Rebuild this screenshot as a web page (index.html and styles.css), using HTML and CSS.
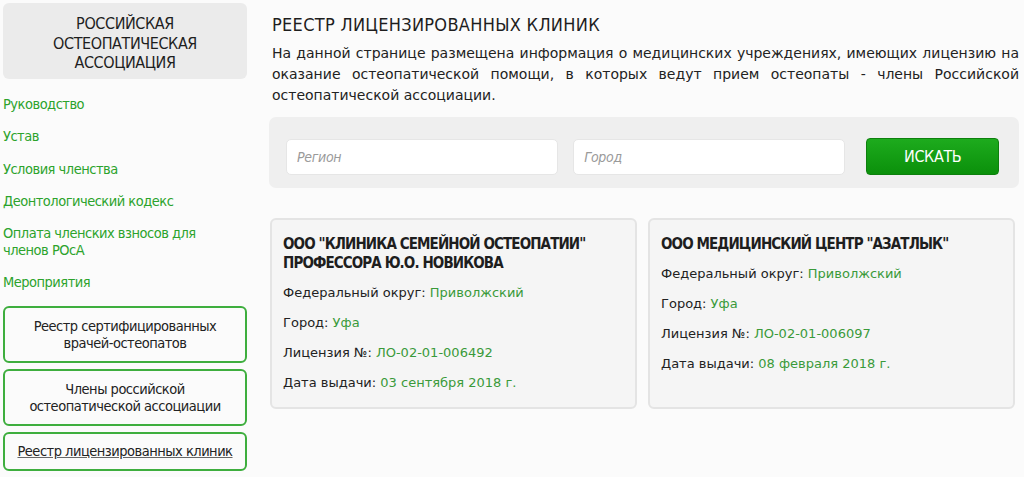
FILE: index.html
```html
<!DOCTYPE html>
<html lang="ru">
<head>
    <meta charset="UTF-8">
    <meta name="viewport" content="width=device-width, initial-scale=1.0">
    <title>Реестр лицензированных клиник</title>
    <link rel="stylesheet" href="styles.css">
</head>
<body>
    <div class="page">
        <aside class="sidebar">
            <div class="logo-box">Российская остеопатическая ассоциация</div>
            <nav class="side-menu">
                <a href="#">Руководство</a>
                <a href="#">Устав</a>
                <a href="#">Условия членства</a>
                <a href="#">Деонтологический кодекс</a>
                <a href="#">Оплата членских взносов для членов РОсА</a>
                <a href="#">Мероприятия</a>
            </nav>
            <div class="side-buttons">
                <a class="side-btn" href="#">Реестр сертифицированных<br>врачей-остеопатов</a>
                <a class="side-btn" href="#">Члены российской<br>остеопатической ассоциации</a>
                <a class="side-btn active" href="#">Реестр лицензированных клиник</a>
            </div>
        </aside>

        <main class="content">
            <h1 class="page-title">Реестр лицензированных клиник</h1>
            <p class="intro">На данной странице размещена информация о медицинских учреждениях, имеющих лицензию на оказание остеопатической помощи, в которых ведут прием остеопаты - члены Российской остеопатической ассоциации.</p>

            <form class="search-panel" onsubmit="return false">
                <input type="text" class="search-input" placeholder="Регион">
                <input type="text" class="search-input" placeholder="Город">
                <button type="submit" class="search-btn">Искать</button>
            </form>

            <div class="clinics">
                <div class="clinic-card">
                    <h3 class="clinic-name">ООО "Клиника семейной остеопатии" профессора Ю.О. Новикова</h3>
                    <p class="clinic-row">Федеральный округ: <span>Приволжский</span></p>
                    <p class="clinic-row">Город: <span>Уфа</span></p>
                    <p class="clinic-row">Лицензия №: <span>ЛО-02-01-006492</span></p>
                    <p class="clinic-row">Дата выдачи: <span>03 сентября 2018 г.</span></p>
                </div>
                <div class="clinic-card">
                    <h3 class="clinic-name">ООО Медицинский центр "Азатлык"</h3>
                    <p class="clinic-row">Федеральный округ: <span>Приволжский</span></p>
                    <p class="clinic-row">Город: <span>Уфа</span></p>
                    <p class="clinic-row">Лицензия №: <span>ЛО-02-01-006097</span></p>
                    <p class="clinic-row">Дата выдачи: <span>08 февраля 2018 г.</span></p>
                </div>
            </div>
        </main>
    </div>
</body>
</html>
```

FILE: styles.css
```css
body {
    margin: 0;
    background-color: #fbfbfb;
    font-family: "DejaVu Sans", Verdana, sans-serif;
    color: #222;
}
.page {
    display: flex;
    padding: 3px;
}
/* Левая колонка */
.sidebar {
    width: 244px;
    flex-shrink: 0;
    font-family: "DejaVu Sans Condensed", sans-serif;
}
.logo-box {
    background-color: #ebebeb;
    border-radius: 6px;
    height: 76px;
    box-sizing: border-box;
    padding: 11px 30px 0;
    text-align: center;
    text-transform: uppercase;
    font-size: 16px;
    letter-spacing: -0.4px;
    line-height: 19.5px;
    color: #1e1e1e;
}
.side-menu {
    display: flex;
    flex-direction: column;
    gap: 15.3px;
    padding: 17px 0 15px;
}
.side-menu a {
    color: #2ca32c;
    text-decoration: none;
    font-size: 14.5px;
    letter-spacing: -0.5px;
    line-height: 17px;
    padding-right: 40px;
}
.side-buttons {
    display: flex;
    flex-direction: column;
    gap: 6px;
}
.side-btn {
    display: block;
    border: 2px solid #3eae3e;
    border-radius: 6px;
    padding: 9.5px 4px;
    text-align: center;
    color: #222;
    text-decoration: none;
    font-size: 14.5px;
    letter-spacing: -0.5px;
    line-height: 17px;
}
.side-btn.active {
    text-decoration: underline;
    text-decoration-color: #666;
    padding: 9px 4px;
}
/* Основная часть */
.content {
    margin-left: 22px;
    width: 750px;
}
.page-title {
    margin: 10px 0 0 3px;
    font-family: "DejaVu Sans Condensed", sans-serif;
    font-weight: normal;
    font-size: 18px;
    line-height: 24px;
    letter-spacing: 0.3px;
    text-transform: uppercase;
    color: #1e1e1e;
}
.intro {
    margin: 6px 0 0 3px;
    font-size: 14px;
    line-height: 21px;
    text-align: justify;
    color: #222;
}
.search-panel {
    display: flex;
    align-items: flex-start;
    gap: 15px;
    margin-top: 11px;
    height: 71px;
    box-sizing: border-box;
    padding: 21px 20px 0 17px;
    background-color: #efefef;
    border-radius: 7px;
}
.search-input {
    width: 273px;
    height: 36px;
    margin-top: 1px;
    box-sizing: border-box;
    border: 1px solid #e6e6e6;
    border-radius: 5px;
    background: #fff;
    padding: 0 10px;
    font-family: "DejaVu Sans Condensed", sans-serif;
    font-size: 14px;
    letter-spacing: -0.3px;
}
.search-input::placeholder {
    color: #9a9a9a;
    font-style: italic;
}
.search-btn {
    margin-left: 6px;
    width: 133px;
    height: 37px;
    border: 1px solid #0d800d;
    border-radius: 4px;
    background: linear-gradient(#1dab1d, #0b900b);
    color: #fff;
    font-family: "DejaVu Sans Condensed", sans-serif;
    font-size: 16px;
    letter-spacing: -0.4px;
    text-transform: uppercase;
    cursor: pointer;
}
.clinics {
    display: flex;
    gap: 11px;
    margin-top: 30px;
    padding-left: 1px;
}
.clinic-card {
    width: 367px;
    height: 191px;
    box-sizing: border-box;
    background-color: #f5f5f5;
    border: 2px solid #e4e4e4;
    border-radius: 6px;
    padding: 15px 11px 0;
}
.clinic-name {
    margin: 0 0 5px;
    font-family: "DejaVu Sans Condensed", sans-serif;
    font-weight: bold;
    font-size: 15px;
    letter-spacing: -0.9px;
    line-height: 19px;
    text-transform: uppercase;
    color: #1e1e1e;
}
.clinic-row {
    margin: 0;
    font-size: 13px;
    line-height: 30px;
    color: #222;
}
.clinic-row span {
    color: #3a9a3a;
}
```
